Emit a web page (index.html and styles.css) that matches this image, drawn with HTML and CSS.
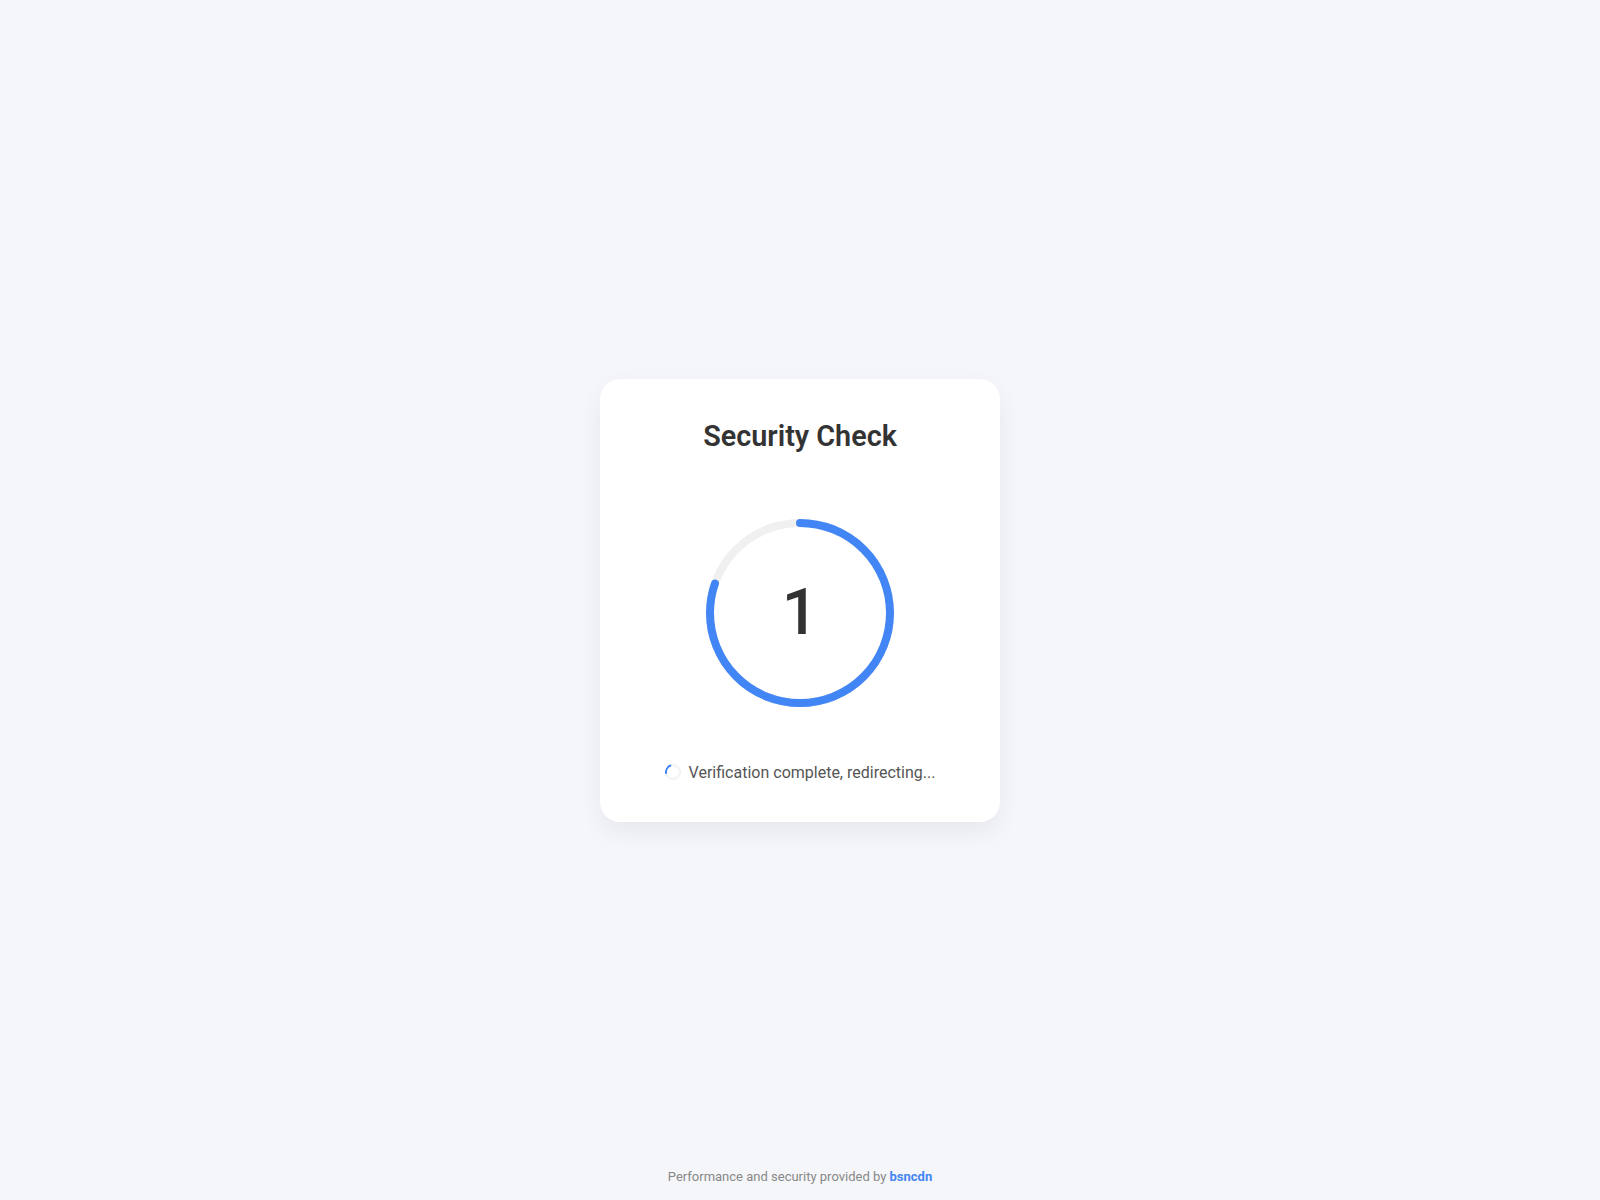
FILE: index.html
```html
<!DOCTYPE html>
<html lang="en">
<head>
    <meta charset="UTF-8">
    <meta name="viewport" content="width=device-width, initial-scale=1">
    <title>Security Check</title>
    <link rel="stylesheet" href="styles.css">
</head>
<body>
    <div class="card">
        <h1 class="title">Security Check</h1>
        <div class="timer">
            <svg class="timer-ring" width="200" height="200" viewBox="0 0 200 200">
                <circle class="ring-track" cx="100" cy="100" r="90"></circle>
                <!-- 4 of 5 seconds still left on the ring -->
                <circle class="ring-progress" cx="100" cy="100" r="90"
                        stroke-dasharray="565.49" stroke-dashoffset="112"></circle>
            </svg>
            <div class="timer-count">1</div>
        </div>
        <div class="status">
            <span class="spinner"></span>
            <span class="status-text">Verification complete, redirecting...</span>
        </div>
    </div>
    <footer class="footer">
        Performance and security provided by <a href="#" class="brand">bsncdn</a>
    </footer>
</body>
</html>
```

FILE: styles.css
```css
html, body {
    height: 100%;
}

body {
    margin: 0;
    font-family: Roboto, "Liberation Sans", Arial, sans-serif;
    background: #f5f6f9;
    color: #333;
    display: grid;
    grid-template-rows: 1fr auto 1fr;
    justify-items: center;
}

.card {
    grid-row: 2;
    width: 400px;
    box-sizing: border-box;
    padding: 40px 30px;
    background: #fff;
    border-radius: 20px;
    box-shadow: 0 10px 25px rgba(0, 0, 0, 0.06);
    text-align: center;
}

.title {
    margin: 0;
    font-size: 28.8px;
    font-weight: 600;
    color: #333;
}

.timer {
    display: grid;
    place-items: center;
    margin: 60px auto 50px;
    width: 200px;
    height: 200px;
}

.timer-ring,
.timer-count {
    grid-area: 1 / 1;
}

.timer-ring {
    transform: rotate(-90deg);
}

.ring-track,
.ring-progress {
    fill: none;
    stroke-width: 8;
}

.ring-track {
    stroke: #f0f0f0;
}

.ring-progress {
    stroke: #4285f4;
    stroke-linecap: round;
}

.timer-count {
    font-size: 64px;
    font-weight: 500;
    color: #333;
}

.status {
    display: flex;
    align-items: center;
    justify-content: center;
    gap: 8px;
    font-size: 16px;
    color: #555;
}

.spinner {
    width: 12px;
    height: 12px;
    border: 2px solid #f3f3f3;
    border-left-color: #4285f4;
    border-radius: 50%;
    transform: rotate(30deg);
}

.footer {
    grid-row: 3;
    align-self: end;
    padding-bottom: 16px;
    font-size: 13px;
    color: #888;
}

.brand {
    color: #4285f4;
    font-weight: 700;
    text-decoration: none;
}
```
